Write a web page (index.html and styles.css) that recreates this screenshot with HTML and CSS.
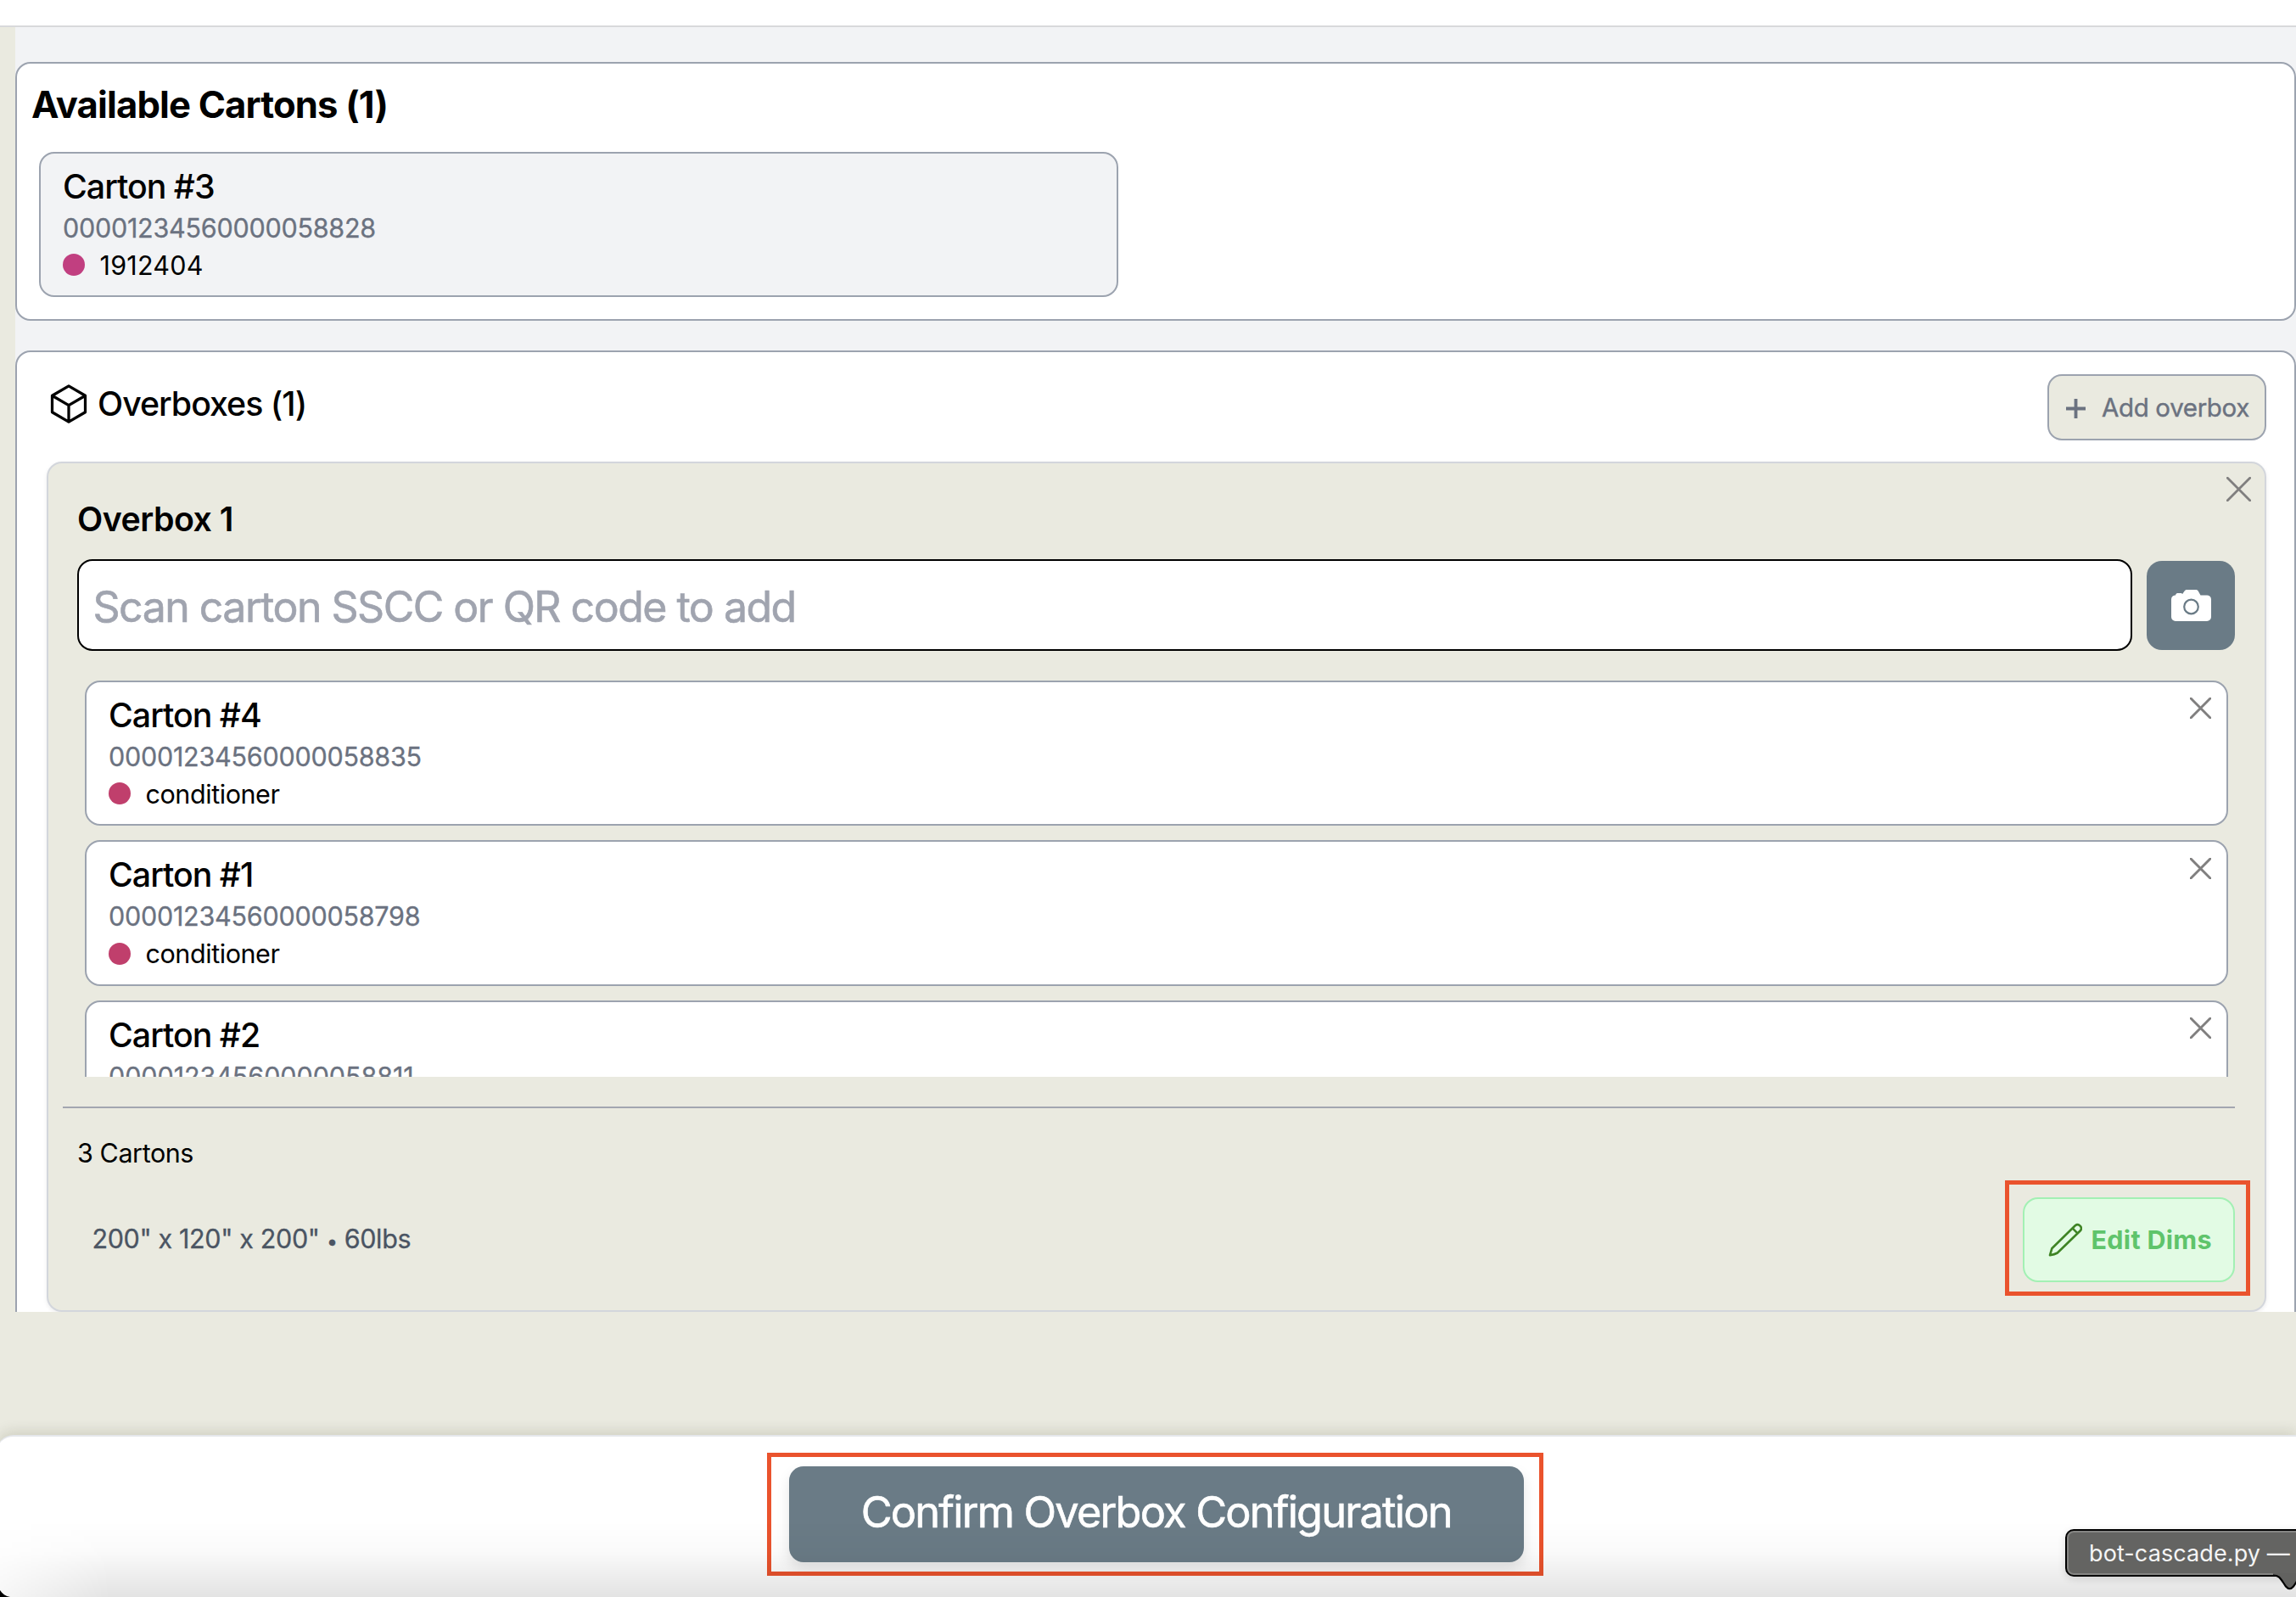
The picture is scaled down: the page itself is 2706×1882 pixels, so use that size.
FILE: index.html
```html
<!DOCTYPE html>
<html lang="en">
<head>
<meta charset="utf-8">
<title>Overbox Configuration</title>
<link rel="stylesheet" href="styles.css">
</head>
<body>
<header class="topbar"></header>

<main class="content">
  <section class="panel available">
    <h1 class="panel-title">Available Cartons (1)</h1>
    <article class="carton carton-muted">
      <h3 class="carton-name">Carton #3</h3>
      <p class="carton-code">00001234560000058828</p>
      <p class="carton-item carton-item-number"><span class="dot dot-magenta"></span>1912404</p>
    </article>
  </section>

  <section class="panel overboxes">
    <div class="overboxes-head">
      <h2 class="overboxes-title">
        <svg class="cube" viewBox="0 0 24 24"><path d="M21 7.5l-9-5.25L3 7.5m18 0l-9 5.25m9-5.25v9l-9 5.25M3 7.5l9 5.25M3 7.5v9l9 5.25m0-9v9"/></svg>
        <span>Overboxes (1)</span>
      </h2>
      <button class="add-btn" type="button">
        <svg class="plus" viewBox="0 0 24 24"><path d="M12 0v24M0 12h24"/></svg>
        <span>Add overbox</span>
      </button>
    </div>

    <div class="overbox">
      <svg class="close close-lg" viewBox="0 0 29 29"><path d="M1.3 1.3l26.4 26.4M27.7 1.3L1.3 27.7"/></svg>
      <h3 class="overbox-name">Overbox 1</h3>
      <div class="scan-row">
        <div class="scan-input"><span>Scan carton SSCC or QR code to add</span></div>
        <button class="camera-btn" type="button" aria-label="Scan with camera">
          <svg class="camera" viewBox="0 0 47 37">
            <path class="camera-body" d="M5 6.4C5.4 4.6 6.6 4 8 4h3c1.2 0 1.8.5 2 1.3L15.6 1.6C16.2.5 17 0 18.3 0H29c1.3 0 2.1.5 2.7 1.5L34.5 6.4H42a5 5 0 0 1 5 5V32a5 5 0 0 1-5 5H5a5 5 0 0 1-5-5V11.4a5 5 0 0 1 5-5z"/>
            <circle class="camera-lens" cx="23.5" cy="20" r="8.3"/>
          </svg>
        </button>
      </div>

      <div class="carton-list">
        <article class="carton">
          <svg class="close" viewBox="0 0 24 24"><path d="M1 1l22 22M23 1L1 23"/></svg>
          <h3 class="carton-name">Carton #4</h3>
          <p class="carton-code">00001234560000058835</p>
          <p class="carton-item"><span class="dot"></span>conditioner</p>
        </article>
        <article class="carton">
          <svg class="close" viewBox="0 0 24 24"><path d="M1 1l22 22M23 1L1 23"/></svg>
          <h3 class="carton-name">Carton #1</h3>
          <p class="carton-code">00001234560000058798</p>
          <p class="carton-item"><span class="dot"></span>conditioner</p>
        </article>
        <article class="carton">
          <svg class="close" viewBox="0 0 24 24"><path d="M1 1l22 22M23 1L1 23"/></svg>
          <h3 class="carton-name">Carton #2</h3>
          <p class="carton-code carton-code-wide">00001234560000058811</p>
        </article>
      </div>

      <div class="overbox-foot">
        <p class="count">3 Cartons</p>
        <div class="dims-row">
          <p class="dims">200" x 120" x 200" <span class="bullet">•</span> 60lbs</p>
          <button class="edit-btn" type="button">
            <svg class="pencil" viewBox="0 0 40 40"><path d="M2 38.2L4.3 30.3L31.8 3.2a4.35 4.35 0 0 1 6.1 6.1L10.8 35.5Q7.5 37.3 2 38.2zM28.6 6.4l5.9 5.9"/></svg>
            <span>Edit Dims</span>
            <i class="highlight highlight-edit"></i>
          </button>
        </div>
      </div>
    </div>
  </section>
</main>

<footer class="actionbar">
  <button class="confirm-btn" type="button">
    <span>Confirm Overbox Configuration</span>
    <i class="highlight highlight-confirm"></i>
  </button>
</footer>

<div class="dock-shade"></div>
<svg class="window-corner" viewBox="0 0 12 8"><path d="M0 0C2.5 4 6.5 7 12 8H0z"/></svg>

<div class="dock-tip">
  <span>bot-cascade.py — p</span>
  <svg class="dock-tip-tail" viewBox="0 0 40 22"><path class="tail-fill" d="M0 0V2.5C8 2.5 9 7 15 15.5Q19.5 21 24 15.5C30 7 31 2.5 39 2.5V0z"/><path class="tail-line" d="M0 2.5C8 2.5 9 7 15 15.5Q19.5 21 24 15.5C30 7 31 2.5 39 2.5"/></svg>
</div>
</body>
</html>
```

FILE: styles.css
```css
* { box-sizing: border-box; }

html, body { height: 1882px; overflow: hidden; }

body {
  position: relative;
  margin: 0;
  display: flex;
  flex-direction: column;
  background: #eaeae0;
  color: #000;
  font-family: Inter, "Liberation Sans", sans-serif;
  font-size: 30.5px;
  line-height: 44px;
}

h1, h2, h3, p { margin: 0; }

button {
  margin: 0;
  padding: 0;
  font: inherit;
  cursor: pointer;
}

svg { display: block; flex: none; }

.topbar {
  flex: none;
  height: 32px;
  background: #fff;
  border-bottom: 2px solid #d8d9db;
}

.content {
  flex: none;
  height: 1514px;
  margin-left: 18px;
  padding-top: 40.5px;
  display: flex;
  flex-direction: column;
  gap: 34.5px;
  overflow: hidden;
  background: #f2f3f5;
}

.panel {
  flex: none;
  background: #fff;
  border: 2px solid #9ca3af;
  border-radius: 18px;
}

.available { height: 305.5px; padding: 22.5px 17px 0; }

.panel-title {
  font-size: 43.6px;
  font-weight: 700;
  line-height: 54px;
  letter-spacing: -0.85px;
}

.available .carton { width: 1272px; margin: 27.5px 0 0 9px; }

/* Carton cards */
.carton {
  position: relative;
  flex: none;
  height: 171.5px;
  padding: 12px 26px 0;
  background: #fff;
  border: 2px solid #9ca3af;
  border-radius: 18px;
}

.carton-muted { background: #f2f3f5; }

.carton-name {
  font-size: 39.3px;
  font-weight: 500;
  line-height: 54px;
  letter-spacing: -1px;
}

.carton-code {
  color: #6b7280;
  letter-spacing: -0.25px;
  -webkit-text-stroke: 0.3px currentColor;
}

.carton-code-wide { letter-spacing: -0.08px; }

.carton-item {
  display: flex;
  align-items: center;
  gap: 17.5px;
  letter-spacing: -0.43px;
}

.carton-item-number { letter-spacing: 0.24px; }

.dot {
  width: 26px;
  height: 26px;
  margin-top: -1px;
  border-radius: 50%;
  background: #c03f6c;
}

.dot-magenta { background: #c13f80; }

.close {
  position: absolute;
  top: 18.5px;
  right: 18px;
  width: 25px;
  height: 25px;
  fill: none;
  stroke: #807f7f;
  stroke-width: 2.8;
  stroke-linecap: round;
}

.close-lg { top: 16px; right: 16px; width: 29px; height: 29px; }

/* Overboxes panel */
.overboxes { height: 1200px; padding: 26px 33px 0 34.5px; }

.overboxes-head {
  display: flex;
  align-items: flex-start;
  justify-content: space-between;
  height: 78px;
}

.overboxes-title {
  display: flex;
  align-items: center;
  gap: 8.5px;
  padding-top: 8px;
  font-size: 39.3px;
  font-weight: 500;
  line-height: 54px;
  letter-spacing: -1px;
}

.cube {
  width: 52px;
  height: 52px;
  fill: none;
  stroke: #000;
  stroke-width: 1.5;
  stroke-linecap: round;
  stroke-linejoin: round;
}

.add-btn {
  display: flex;
  align-items: center;
  justify-content: center;
  gap: 19px;
  width: 258px;
  height: 78px;
  padding-left: 2px;
  border: 2px solid #9ca3af;
  border-radius: 17px;
  background: #eaeae0;
  color: #6b7280;
  font-size: 29.5px;
  letter-spacing: -0.34px;
  -webkit-text-stroke: 0.4px currentColor;
}

.plus {
  width: 23px;
  height: 23px;
  margin-top: 3px;
  fill: none;
  stroke: #6b7280;
  stroke-width: 4;
}

.overbox {
  position: relative;
  height: 1002px;
  margin-top: 25.5px;
  padding: 38.5px 35px 0 34.5px;
  background: #eaeae0;
  border: 2px solid #d3d6dc;
  border-radius: 18px;
  box-shadow: 0 2px 5px rgba(0, 0, 0, 0.08);
}

.overbox-name {
  font-size: 39.3px;
  font-weight: 600;
  line-height: 54px;
  letter-spacing: -0.5px;
}

.scan-row {
  display: flex;
  align-items: center;
  gap: 17.5px;
  height: 108px;
  margin-top: 20.5px;
}

.scan-input {
  flex: 1;
  display: flex;
  align-items: center;
  height: 108px;
  padding: 3px 16.5px 0;
  background: #fff;
  border: 2px solid #000;
  border-radius: 18px;
  color: #a0a4af;
  font-size: 50px;
  letter-spacing: -1.5px;
  -webkit-text-stroke: 0.6px currentColor;
}

.camera-btn {
  display: flex;
  align-items: center;
  justify-content: center;
  width: 104px;
  height: 105px;
  border: 0;
  border-radius: 18px;
  background: #6a7b86;
}

.camera { width: 47px; height: 37px; }
.camera-body { fill: #fff; }
.camera-lens { fill: none; stroke: #6a7b86; stroke-width: 2.2; }

.carton-list {
  display: flex;
  flex-direction: column;
  gap: 17px;
  height: 467px;
  margin-top: 34.5px;
  padding: 0 8.5px 0 9px;
  overflow: hidden;
}

.overbox-foot {
  margin: 35px 0 0 -17.5px;
  padding: 31px 0 0 17.5px;
  border-top: 2px solid #a3a6b0;
}

.count { letter-spacing: -0.43px; }

.dims-row {
  display: flex;
  align-items: center;
  justify-content: space-between;
  height: 100px;
  margin-top: 30px;
  padding-left: 17.5px;
}

.dims {
  padding-top: 1px;
  color: #4b5563;
  letter-spacing: -0.36px;
  -webkit-text-stroke: 0.3px currentColor;
}

.bullet { font-size: 23px; }

.edit-btn {
  position: relative;
  display: flex;
  align-items: center;
  gap: 10.5px;
  width: 250px;
  height: 100px;
  padding-left: 28px;
  border: 2px solid #a3f0b4;
  border-radius: 18px;
  background: #e2fbe4;
  color: #5fc46b;
  font-weight: 700;
  letter-spacing: 0.3px;
}

.pencil {
  width: 40px;
  height: 40px;
  fill: none;
  stroke: #3f8425;
  stroke-width: 2.6;
  stroke-linecap: round;
  stroke-linejoin: round;
}

/* Callout frames */
.highlight { position: absolute; border: 5px solid #ea532d; }
.highlight-edit { inset: -22px -20px -18px -23px; }
.highlight-confirm { inset: -16px -23.5px -16px -25.5px; }

/* Bottom action bar */
.actionbar {
  flex: none;
  display: flex;
  justify-content: center;
  align-items: flex-start;
  width: 2710px;
  height: 191px;
  margin: 145px 0 0 -4px;
  padding: 35px 0 0 23.5px;
  background: #fff;
  border-top: 2px solid #e5e7eb;
  border-top-left-radius: 20px;
  box-shadow: 0 -4px 16px rgba(50, 50, 0, 0.14);
}

.confirm-btn {
  position: relative;
  width: 866px;
  height: 113px;
  padding-bottom: 6px;
  border: 0;
  border-radius: 17px;
  background: #6a7b86;
  color: #fff;
  font-size: 50.5px;
  letter-spacing: -1.8px;
  -webkit-text-stroke: 0.6px currentColor;
  box-shadow: 0 8px 16px rgba(0, 0, 0, 0.1);
}

.dock-shade {
  position: absolute;
  left: 0;
  right: 0;
  bottom: 0;
  height: 90px;
  background: linear-gradient(to bottom, rgba(0, 0, 0, 0) 0%, rgba(0, 0, 0, 0.02) 40%, rgba(0, 0, 0, 0.11) 100%);
  -webkit-mask-image: linear-gradient(to right, rgba(0, 0, 0, 0.3), #000 130px);
  mask-image: linear-gradient(to right, rgba(0, 0, 0, 0.3), #000 130px);
  pointer-events: none;
}

.window-corner { position: absolute; left: 0; bottom: 0; width: 12px; height: 8px; }

.dock-tip {
  position: absolute;
  left: 2434px;
  top: 1802px;
  display: flex;
  align-items: center;
  width: 290px;
  height: 56px;
  padding: 1px 0 0 26px;
  border: 2px solid #000;
  border-radius: 10px;
  background: #646462;
  box-shadow: inset 0 0 0 2px #858583, 0 3px 10px rgba(0, 0, 0, 0.12);
  color: #f5f5f5;
  font-size: 27px;
  letter-spacing: 0.1px;
  white-space: nowrap;
}

.dock-tip-tail { position: absolute; left: 242.5px; top: 50px; width: 40px; height: 22px; }
.tail-fill { fill: #626260; }
.tail-line { fill: none; stroke: #000; stroke-width: 2.2; }
```
